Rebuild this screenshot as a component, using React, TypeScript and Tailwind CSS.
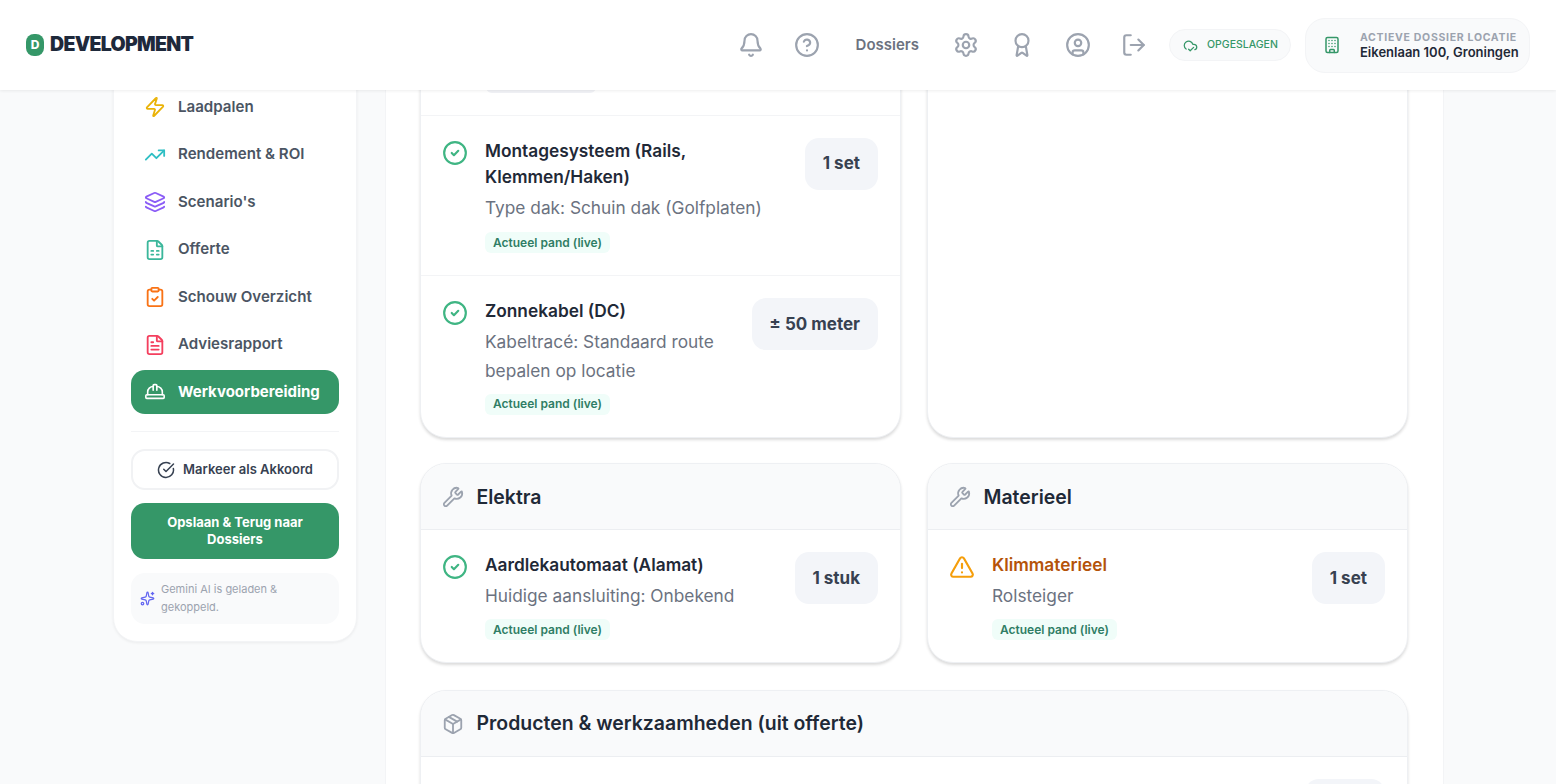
import {
  Award,
  Bell,
  Building,
  CircleCheck,
  CircleCheckBig,
  CircleHelp,
  CircleUser,
  ClipboardCheck,
  CloudCheck,
  FileSpreadsheet,
  FileText,
  HardHat,
  Layers,
  LogOut,
  Package,
  Settings,
  Sparkles,
  TrendingUp,
  TriangleAlert,
  Wrench,
  Zap,
} from 'lucide-react'

const NAV_ITEMS = [
  { label: 'Laadpalen', icon: Zap, color: 'text-[#eab308]' },
  { label: 'Rendement & ROI', icon: TrendingUp, color: 'text-[#2fbfc4]' },
  { label: "Scenario's", icon: Layers, color: 'text-[#8b5cf6]' },
  { label: 'Offerte', icon: FileSpreadsheet, color: 'text-[#3bb79b]' },
  { label: 'Schouw Overzicht', icon: ClipboardCheck, color: 'text-[#f97316]' },
  { label: 'Adviesrapport', icon: FileText, color: 'text-[#f43f5e]' },
] as const

function Quantity({ children }: { children: string }) {
  return (
    <div className="flex h-[52px] shrink-0 items-center rounded-[14px] bg-[#f3f5f9] px-[17.5px] text-[17px] font-bold whitespace-nowrap text-[#374151]">
      {children}
    </div>
  )
}

type RowProps = {
  title: string
  lines: string
  quantity: string
  warning?: boolean
  loose?: boolean
}

function Row({ title, lines, quantity, warning, loose }: RowProps) {
  return (
    <div className="flex items-start justify-between gap-6 p-[22px]">
      <div className="flex min-w-0 gap-[17.5px]">
        {warning ? (
          <TriangleAlert className="-ml-[1px] mt-[2px] size-[26px] shrink-0 text-[#f59e0b]" strokeWidth={2} />
        ) : (
          <CircleCheck className="-ml-[1px] mt-[2px] size-[26px] shrink-0 text-[#3fb583]" strokeWidth={2} />
        )}
        <div className="min-w-0">
          <div className={`text-[17.3px] leading-[26px] font-semibold ${warning ? 'text-[#b45309]' : 'text-[#1f2937]'}`}>
            {title}
          </div>
          <div className="mt-[3.5px] text-[17.3px] leading-[28.8px] text-[#6b7280]">{lines}</div>
          <span
            className={`flex h-[21px] w-fit items-center rounded-md bg-[#f0fdf9] px-2 text-[12px] font-semibold text-[#2f7d65] ${loose ? 'mt-[10px]' : 'mt-[8.5px]'}`}
          >
            Actueel pand (live)
          </span>
        </div>
      </div>
      <Quantity>{quantity}</Quantity>
    </div>
  )
}

function SectionHeader({ title, icon: Icon }: { title: string; icon: typeof Wrench }) {
  return (
    <div className="flex h-[66px] items-center gap-[13px] border-b border-[#eceef1] bg-[#f9fafb] pt-[1px] pr-[22px] pl-[21px]">
      <Icon className="size-[22px] text-[#9ca3af]" strokeWidth={2} />
      <h3 className="text-[19.45px] font-semibold text-[#1f2937]">{title}</h3>
    </div>
  )
}

const cardClass =
  'overflow-hidden rounded-[26px] border border-[#eef0f3] bg-white shadow-[0_2px_3px_rgba(0,0,0,0.14)]'

export default function App() {
  return (
    <div className="flex h-screen flex-col overflow-hidden bg-[#f9fafb] font-['Inter',sans-serif]">
      {/* Header */}
      <header className="relative z-10 flex h-[90px] shrink-0 items-center justify-between bg-white px-[26px] shadow-[0_1px_3px_rgba(0,0,0,0.07)]">
        <div className="flex items-center gap-[6px]">
          <div className="flex h-[22px] w-[18px] items-center justify-center rounded-[8px] bg-[#359768] text-[12px] font-extrabold text-white">
            D
          </div>
          <span className="text-[19.5px] font-black tracking-[-0.7px] text-[#1e293b]">DEVELOPMENT</span>
        </div>
        <div className="flex items-center">
          <div className="flex items-center gap-[30px] text-[#9ca3af]">
            <Bell className="size-[26px]" strokeWidth={2} />
            <CircleHelp className="size-[26px]" strokeWidth={2} />
            <span className="pr-[4px] pl-[5.5px] text-[15px] font-semibold text-[#6b7280]">Dossiers</span>
            <Settings className="size-[26px]" strokeWidth={2} />
            <Award className="size-[26px]" strokeWidth={2} />
            <CircleUser className="size-[26px]" strokeWidth={2} />
            <LogOut className="size-[26px]" strokeWidth={2} />
          </div>
          <div className="ml-[22px] flex h-[32px] w-[122px] items-center gap-[9px] rounded-full border border-[#f3f4f6] bg-[#f9fafb] pl-[13px]">
            <CloudCheck className="size-[15px] text-[#359768]" strokeWidth={2} />
            <span className="text-[10.5px] font-medium text-[#359768] uppercase">Opgeslagen</span>
          </div>
          <div className="ml-[14px] flex h-[55px] w-[225px] items-center gap-[19px] rounded-[20px] border border-[#f3f4f6] bg-[#f9fafb] pl-[17px]">
            <Building className="size-[18px] text-[#359768]" strokeWidth={2} />
            <div>
              <div className="text-[10.5px] leading-[15px] font-bold tracking-[0.7px] text-[#9ca3af] uppercase">
                Actieve dossier locatie
              </div>
              <div className="text-[13px] leading-[15px] font-semibold whitespace-nowrap text-[#1f2937]">
                Eikenlaan 100, Groningen
              </div>
            </div>
          </div>
        </div>
      </header>

      <div className="flex min-h-0 flex-1 items-start gap-[27.5px] overflow-hidden pl-[113px]">
        {/* Sidebar */}
        <aside className="-mt-[40px] w-[244px] shrink-0 rounded-[24px] border border-[#f3f4f6] bg-white px-[17px] pt-[34.5px] pb-[17px] shadow-[0_1px_3px_rgba(0,0,0,0.06)]">
          <nav className="flex flex-col gap-1">
            {NAV_ITEMS.map(({ label, icon: Icon, color }) => (
              <div key={label} className="flex h-[43.5px] items-center gap-[12px] rounded-[14px] px-[13px]">
                <Icon className={`size-[22px] ${color}`} strokeWidth={2} />
                <span className="text-[15.1px] font-semibold text-[#4b5563]">{label}</span>
              </div>
            ))}
            <div className="-mt-[0.5px] flex h-[43.5px] items-center gap-[12px] rounded-[14px] bg-[#359768] px-[13px] text-white">
              <HardHat className="size-[22px]" strokeWidth={1.75} />
              <span className="text-[15px] font-bold">Werkvoorbereiding</span>
            </div>
          </nav>
          <div className="mt-[17.5px] border-t border-[#f3f4f6]" />
          <button className="mt-[17px] flex h-[41px] w-full items-center justify-center gap-2 rounded-[14px] border-2 border-[#f1f2f4] bg-white text-[13px] font-semibold text-[#374151]">
            <CircleCheckBig className="size-[18px]" strokeWidth={2} />
            Markeer als Akkoord
          </button>
          <button className="mt-[13px] h-[56px] w-full rounded-[14px] bg-[#359768] px-4 text-[13px] leading-[17px] font-bold text-white">
            Opslaan &amp; Terug naar Dossiers
          </button>
          <div className="mt-[14px] flex h-[51px] items-center gap-[6px] rounded-[14px] bg-[#f9fafb] px-[9px] pb-[2px]">
            <Sparkles className="mt-[2px] size-[15px] shrink-0 text-[#6366f1]" strokeWidth={2} />
            <p className="text-[11px] leading-[18px] text-[#9ca3af]">Gemini AI is geladen &amp; gekoppeld.</p>
          </div>
        </aside>

        {/* Werkvoorbereiding content */}
        <main className="-mt-[41px] w-[1059px] shrink-0 border-x border-[#f3f4f6] bg-white pr-[35px] pl-[34px]">
          <div className="grid grid-cols-2 gap-[26px]">
            <div className={cardClass}>
              <div className="border-b border-[#f3f4f6] p-[22px] pl-[65px]">
                <div className="h-[21px] w-[110px] rounded-md bg-[#f1f2f6]" />
              </div>
              <div className="border-b border-[#f3f4f6]">
                <Row
                  title="Montagesysteem (Rails, Klemmen/Haken)"
                  lines="Type dak: Schuin dak (Golfplaten)"
                  quantity="1 set"
                  loose
                />
              </div>
              <Row
                title="Zonnekabel (DC)"
                lines="Kabeltracé: Standaard route bepalen op locatie"
                quantity="± 50 meter"
              />
            </div>
            <div className={cardClass} />
          </div>

          <div className="mt-[25.5px] grid grid-cols-2 gap-[26px]">
            <div className={cardClass}>
              <SectionHeader title="Elektra" icon={Wrench} />
              <Row title="Aardlekautomaat (Alamat)" lines="Huidige aansluiting: Onbekend" quantity="1 stuk" />
            </div>
            <div className={cardClass}>
              <SectionHeader title="Materieel" icon={Wrench} />
              <Row title="Klimmaterieel" lines="Rolsteiger" quantity="1 set" warning />
            </div>
          </div>

          <div className={`mt-[26.5px] ${cardClass}`}>
            <SectionHeader title="Producten & werkzaamheden (uit offerte)" icon={Package} />
            <div className="flex justify-end p-[22px]">
              <div className="h-[52px] w-[80px] rounded-[14px] bg-[#f3f5f9]" />
            </div>
          </div>
        </main>
      </div>
    </div>
  )
}
